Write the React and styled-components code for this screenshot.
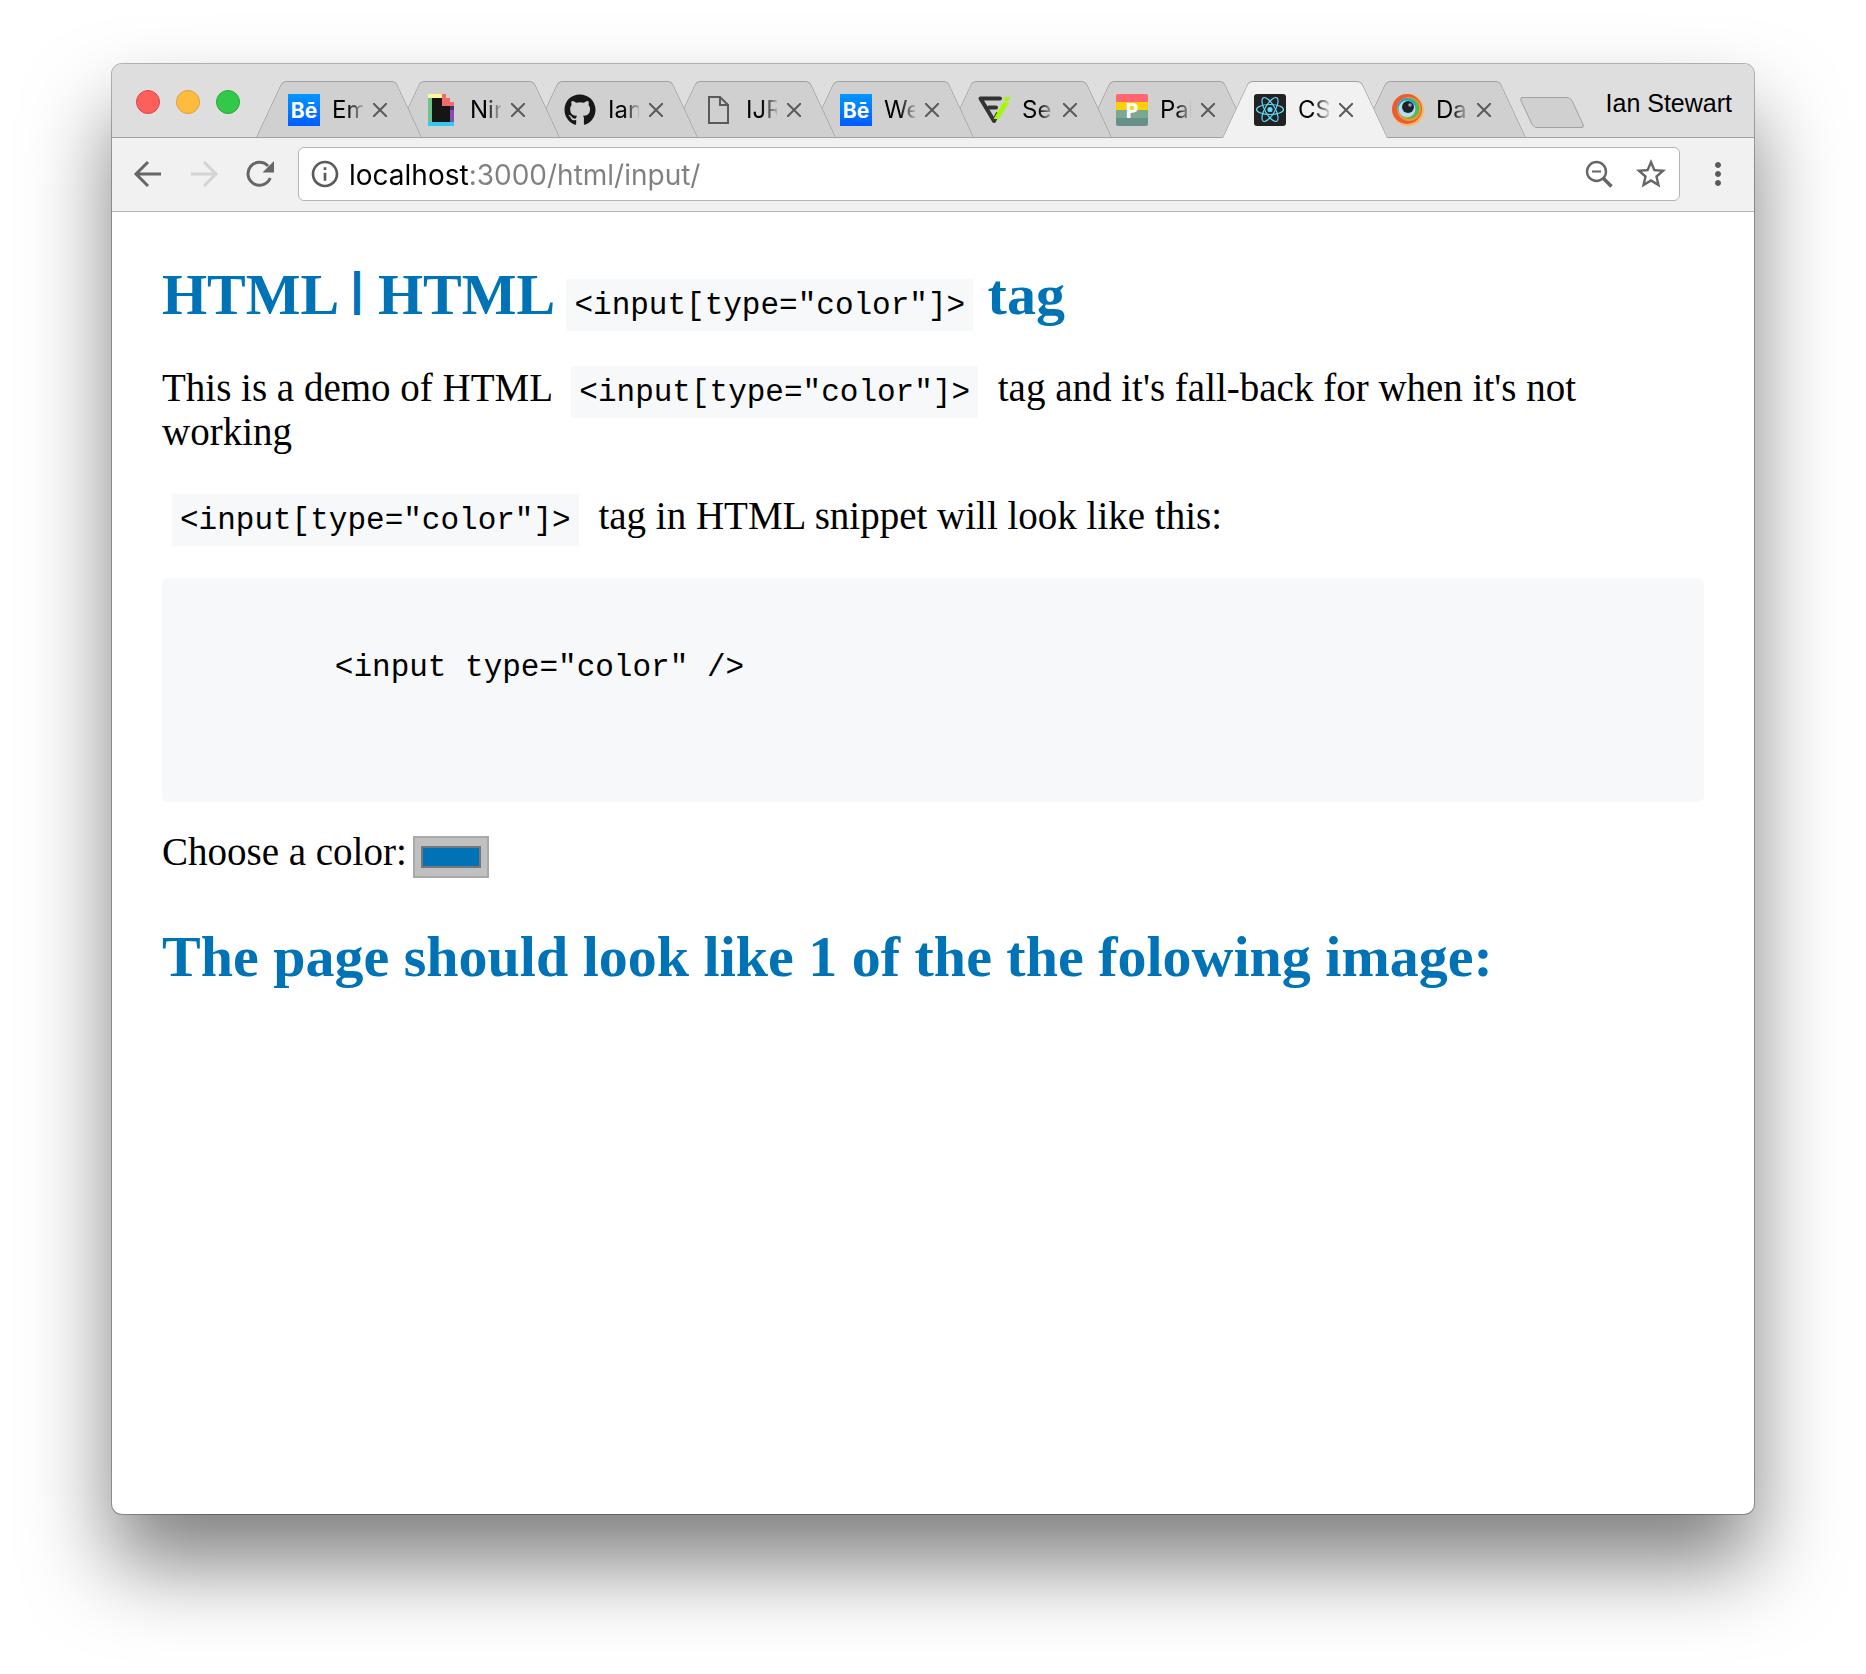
import React, { useState } from "react";
import styled, { createGlobalStyle, css } from "styled-components";
import { FaGithub } from "react-icons/fa";
import { MdInfoOutline, MdStarBorder, MdMoreVert } from "react-icons/md";

const colors = {
  strip: "#dedede",
  tab: "#d0d0d0",
  toolbar: "#f1f1f1",
  line: "#a0a0a0",
  icon: "#5a5a5a",
  accent: "#0073b7",
  codeBg: "#f6f8fa",
};

const uiFont = '"Inter", "Roboto", sans-serif';

const GlobalStyle = createGlobalStyle`
  * { box-sizing: border-box; }
  body { margin: 0; background: #fff; color: #000; }
  button { border: 0; padding: 0; background: none; font: inherit; color: inherit; }
  svg { display: block; }
`;

const Desktop = styled.div`
  display: flex;
  min-height: 100vh;
  padding: 64px 112px 160px;
  overflow: hidden;
`;

const BrowserWindow = styled.div`
  flex: 1;
  min-width: 0;
  display: flex;
  flex-direction: column;
  overflow: hidden;
  border-radius: 10px;
  background: #fff;
  box-shadow: 0 0 0 1px rgba(0, 0, 0, 0.28), 0 50px 84px rgba(0, 0, 0, 0.5);
`;

const TabStrip = styled.header`
  display: flex;
  align-items: flex-end;
  height: 74px;
  padding: 0 22px 0 24px;
  background: ${colors.strip};
  border-bottom: 1px solid ${colors.line};
  font-family: ${uiFont};
  font-size: 24px;
`;

const WindowControls = styled.div`
  display: flex;
  align-self: center;
  gap: 16px;
  margin-right: 16px;
  padding-top: 2px;
`;

const Light = styled.button`
  width: 24px;
  height: 24px;
  border-radius: 50%;
  background: ${(p) => p.$fill};
  border: 1px solid ${(p) => p.$ring};
`;

const Tabs = styled.nav`
  display: flex;
  padding-right: 28px;
`;

const edge = css`
  content: "";
  position: absolute;
  z-index: -1;
  top: 0;
  bottom: ${(p) => (p.$active ? "-1px" : "0")};
  width: 50%;
  background: ${(p) => (p.$active ? colors.toolbar : colors.tab)};
  border-top: 1px solid ${colors.line};
`;

const Tab = styled.div`
  position: relative;
  z-index: ${(p) => p.$order};
  display: flex;
  align-items: center;
  width: 166px;
  height: 56px;
  margin-right: -28px;
  padding: 2px 32px 0;

  &::before {
    ${edge}
    left: 0;
    border-left: 1px solid ${colors.line};
    border-top-left-radius: 5px;
    transform: skewX(-25deg);
    transform-origin: bottom left;
  }
  &::after {
    ${edge}
    right: 0;
    border-right: 1px solid ${colors.line};
    border-top-right-radius: 5px;
    transform: skewX(25deg);
    transform-origin: bottom right;
  }
`;

const TabButton = styled.button`
  display: flex;
  align-items: center;
  gap: 12px;
  height: 32px;
`;

const TabTitle = styled.span`
  width: 31px;
  overflow: hidden;
  white-space: nowrap;
  text-align: left;
  line-height: 32px;
  mask-image: linear-gradient(to right, #000 50%, transparent 108%);
`;

const CloseButton = styled.button`
  margin-left: 10px;
  flex: none;
`;

const NewTab = styled.button`
  align-self: center;
  width: 52px;
  height: 31px;
  margin-top: 24px;
  background: ${colors.tab};
  border: 1px solid ${colors.line};
  border-radius: 4px;
  transform: skewX(25deg);
`;

const Profile = styled.button`
  align-self: center;
  margin-left: auto;
  padding-top: 5px;
  font-family: "Liberation Sans", Arial, sans-serif;
  font-size: 25px;
  line-height: 28px;
  white-space: nowrap;
`;

const Toolbar = styled.div`
  display: flex;
  align-items: center;
  gap: 20px;
  height: 74px;
  padding: 0 18px 2px;
  background: ${colors.toolbar};
  border-bottom: 1px solid #b4b4b4;
`;

const IconButton = styled.button`
  color: ${(p) => (p.disabled ? "#d4d4d4" : "#666")};
  flex: none;
`;

const AddressBar = styled.div`
  flex: 1;
  display: flex;
  align-items: center;
  gap: 8px;
  height: 54px;
  padding: 0 10px;
  background: #fff;
  border: 1px solid #b4b4b4;
  border-radius: 6px;
`;

const BarActions = styled.div`
  display: flex;
  align-items: center;
  gap: 20px;
`;

const Address = styled.input`
  flex: 1;
  min-width: 0;
  height: 40px;
  padding: 2px 0 0;
  border: 0;
  outline: 0;
  font-family: ${uiFont};
  font-size: 28px;
  color: transparent;
  background: linear-gradient(to right, #000 119px, #808080 119px);
  background-clip: text;
`;

const Page = styled.main`
  flex: 1;
  padding: 50px;
  font-family: "Liberation Serif", "Times New Roman", serif;
  font-size: 39px;
  line-height: 44px;
`;

const Title = styled.h1`
  margin: 0 0 38px;
  font-size: 58px;
  line-height: 66px;
  color: ${colors.accent};
`;

const Bar = styled.span`
  font-family: "Liberation Sans", Arial, sans-serif;
  font-size: 46px;
  line-height: 1;
  vertical-align: 9px;
`;

const Code = styled.code`
  padding: 9px 8px 8px;
  font-family: "Liberation Mono", "Courier New", monospace;
  font-size: 31px;
  font-weight: 400;
  line-height: 1;
  color: #000;
  background: ${colors.codeBg};
`;

const Text = styled.p`
  margin: 0 0 40px;
  padding-right: 24px;

  ${Code} {
    margin: 0 10px;
  }
`;

const Snippet = styled.pre`
  margin: 0 0 28px;
  padding: 24px;
  overflow: auto;
  font-family: "Liberation Mono", "Courier New", monospace;
  font-size: 31px;
  background: ${colors.codeBg};
  border-radius: 6px;
`;

const Field = styled.div`
  display: flex;
  align-items: flex-start;
  gap: 6px;
  margin-bottom: 46px;
`;

const ColorInput = styled.input`
  appearance: none;
  width: 76px;
  height: 42px;
  margin: 6px 0 0;
  padding: 0;
  background: #c0c0c0;
  border: 2px solid #a9a9a9;

  &::-webkit-color-swatch-wrapper {
    padding: 8px 6px;
  }
  &::-webkit-color-swatch {
    border: 2px solid #777;
  }
`;

const LogoText = styled.text`
  font-family: ${(p) => p.$family};
  font-size: ${(p) => p.$size}px;
  font-weight: 700;
  fill: #fff;
`;

const Behance = ({ id }) => (
  <svg width="32" height="32" viewBox="0 0 32 32" aria-hidden="true">
    <defs>
      <linearGradient id={id} x2="0" y2="1">
        <stop stopColor="#0096ff" />
        <stop offset="1" stopColor="#005cff" />
      </linearGradient>
    </defs>
    <rect width="32" height="32" fill={`url(#${id})`} />
    <LogoText x="16" y="24" textAnchor="middle" $size={21} $family='"Inter", sans-serif'>Bē</LogoText>
  </svg>
);

const Nin = () => (
  <svg width="32" height="32" viewBox="0 0 32 32" aria-hidden="true">
    <path fill="#151515" d="M6 4h10v8h8v16H6z" />
    <path fill="#fff799" d="M2 0h14v4H2z" />
    <path fill="#6fc48a" d="M2 4h4v24H2z" />
    <path fill="#35c6f4" d="M2 28h26v4H2z" />
    <path fill="#7e55a5" d="M24 16h4v12h-4z" />
    <path fill="#4e2a7f" d="M24 12h4v4h-4z" />
    <path fill="#f26b6b" d="M16 0h4v4h4v4h4v4H16z" />
  </svg>
);

const Doc = () => (
  <svg width="32" height="32" viewBox="0 0 32 32" aria-hidden="true">
    <path d="M7 3h11l8 8v18H7zM18 3v8h8" fill="none" stroke="#5a5a5a" strokeWidth="2" />
  </svg>
);

const Fi = () => (
  <svg width="32" height="32" viewBox="0 0 32 32" aria-hidden="true">
    <g fill="none" stroke="#333" strokeWidth="4" strokeLinejoin="round" strokeLinecap="round">
      <path d="M22 4.500H2.500L16 27l3.500-7" />
      <path d="M11 13.500h7" />
    </g>
    <path fill="#a6f800" d="M25 8.500h6L21 25h-5.500zM27 3h5.500l-2 4H25z" />
  </svg>
);

const PalSvg = styled.svg`
  border-radius: 2px;
`;

const Pal = () => (
  <PalSvg width="32" height="32" viewBox="0 0 32 32" aria-hidden="true">
    <path fill="#ff666f" d="M0 0h32v8H0z" />
    <path fill="#ffd000" d="M0 8h32v8H0z" />
    <path fill="#7aa98f" d="M0 16h32v8H0z" />
    <path fill="#67908c" d="M0 24h32v8H0z" />
    <LogoText x="16" y="24" textAnchor="middle" $size={22} $family='"Open Sans", sans-serif'>P</LogoText>
  </PalSvg>
);

const Atom = () => (
  <svg width="32" height="32" viewBox="0 0 32 32" aria-hidden="true">
    <rect width="32" height="32" rx="3" fill="#222" />
    <circle cx="16" cy="15.500" r="2.600" fill="#61dafb" />
    <g fill="none" stroke="#61dafb" strokeWidth="1.200">
      {[0, 60, 120].map((a) => (
        <ellipse key={a} cx="16" cy="15.500" rx="13.500" ry="5" transform={`rotate(${a} 16 15.500)`} />
      ))}
    </g>
  </svg>
);

const Eye = () => (
  <svg width="32" height="32" viewBox="0 0 32 32" aria-hidden="true">
    <circle cx="16" cy="16" r="16" fill="#f6b95f" />
    <circle cx="15" cy="15" r="15" fill="#ea5b36" />
    <circle cx="17" cy="15" r="12" fill="#f39a2e" />
    <circle cx="17" cy="14.500" r="10.500" fill="#5bb947" />
    <circle cx="15" cy="13.500" r="9.500" fill="#1fa9c9" />
    <circle cx="15" cy="15" r="8.500" fill="#b9dcea" />
    <circle cx="16" cy="13" r="6" fill="#1d2227" />
    <circle cx="18" cy="11" r="1.800" fill="#98a6ad" />
  </svg>
);

const Cross = () => (
  <svg width="14" height="14" viewBox="0 0 14 14" aria-hidden="true">
    <path d="M0 0l14 14M14 0L0 14" stroke={colors.icon} strokeWidth="2" />
  </svg>
);

const BackArrow = () => (
  <svg width="36" height="36" viewBox="0 0 36 36" aria-hidden="true">
    <path d="M31 18H7M18 6L6 18l12 12" fill="none" stroke="currentColor" strokeWidth="3" />
  </svg>
);

const ForwardArrow = () => (
  <svg width="36" height="36" viewBox="0 0 36 36" aria-hidden="true">
    <path d="M5 18h24M18 6l12 12-12 12" fill="none" stroke="currentColor" strokeWidth="3" />
  </svg>
);

const Reload = () => (
  <svg width="36" height="36" viewBox="0 0 36 36" aria-hidden="true">
    <path d="M28.200 22A11.500 11.500 0 1 1 26 10" fill="none" stroke="currentColor" strokeWidth="3" />
    <path d="M32 5v11.500H20.500z" fill="currentColor" />
  </svg>
);

const ZoomOut = () => (
  <svg width="28" height="28" viewBox="0 0 28 28" aria-hidden="true">
    <circle cx="11.500" cy="11.500" r="9.500" fill="none" stroke="currentColor" strokeWidth="2.400" />
    <path d="M7 11.500h9" stroke="currentColor" strokeWidth="1.800" />
    <path d="M18.500 18.500l8 8" stroke="currentColor" strokeWidth="3.600" />
  </svg>
);

const TABS = [
  { title: "Em", icon: <Behance id="be-a" /> },
  { title: "Nin", icon: <Nin /> },
  { title: "Ian", icon: <FaGithub size={32} color="#181616" /> },
  { title: "IJR", icon: <Doc /> },
  { title: "We", icon: <Behance id="be-b" /> },
  { title: "Sea", icon: <Fi /> },
  { title: "Pal", icon: <Pal /> },
  { title: "CS", icon: <Atom /> },
  { title: "Da", icon: <Eye /> },
];

const TAG = '<input[type="color"]>';
const SNIPPET = '\n        <input type="color" />\n      \n      ';

export default function App() {
  const [active, setActive] = useState(7);
  const [url, setUrl] = useState("localhost:3000/html/input/");
  const [color, setColor] = useState("#0073b7");

  return (
    <Desktop>
      <GlobalStyle />
      <BrowserWindow>
        <TabStrip>
          <WindowControls>
            <Light aria-label="Close window" $fill="#fc605c" $ring="#e2443f" />
            <Light aria-label="Minimize window" $fill="#fdbc40" $ring="#e0a033" />
            <Light aria-label="Zoom window" $fill="#34c84a" $ring="#27aa35" />
          </WindowControls>
          <Tabs>
            {TABS.map((t, i) => (
              <Tab key={i} $active={i === active} $order={i === active ? 20 : 10 - i}>
                <TabButton onClick={() => setActive(i)}>
                  {t.icon}
                  <TabTitle>{t.title}</TabTitle>
                </TabButton>
                <CloseButton aria-label={`Close ${t.title}`}>
                  <Cross />
                </CloseButton>
              </Tab>
            ))}
          </Tabs>
          <NewTab aria-label="New tab" />
          <Profile>Ian Stewart</Profile>
        </TabStrip>
        <Toolbar>
          <IconButton aria-label="Back"><BackArrow /></IconButton>
          <IconButton aria-label="Forward" disabled><ForwardArrow /></IconButton>
          <IconButton aria-label="Reload"><Reload /></IconButton>
          <AddressBar>
            <IconButton aria-label="Site information"><MdInfoOutline size={32} color={colors.icon} /></IconButton>
            <Address aria-label="Address" value={url} onChange={(e) => setUrl(e.target.value)} />
            <BarActions>
              <IconButton aria-label="Zoom out"><ZoomOut /></IconButton>
              <IconButton aria-label="Bookmark"><MdStarBorder size={36} /></IconButton>
            </BarActions>
          </AddressBar>
          <IconButton aria-label="Menu"><MdMoreVert size={36} color={colors.icon} /></IconButton>
        </Toolbar>
        <Page>
          <Title>
            HTML <Bar>|</Bar> HTML <Code>{TAG}</Code> tag
          </Title>
          <Text>
            This is a demo of HTML <Code>{TAG}</Code> tag and it's fall-back for when it's not working
          </Text>
          <Text>
            <Code>{TAG}</Code> tag in HTML snippet will look like this:
          </Text>
          <Snippet>{SNIPPET}</Snippet>
          <Field>
            <label htmlFor="color">Choose a color:</label>
            <ColorInput id="color" type="color" value={color} onChange={(e) => setColor(e.target.value)} />
          </Field>
          <Title as="h2">The page should look like 1 of the the folowing image:</Title>
        </Page>
      </BrowserWindow>
    </Desktop>
  );
}
